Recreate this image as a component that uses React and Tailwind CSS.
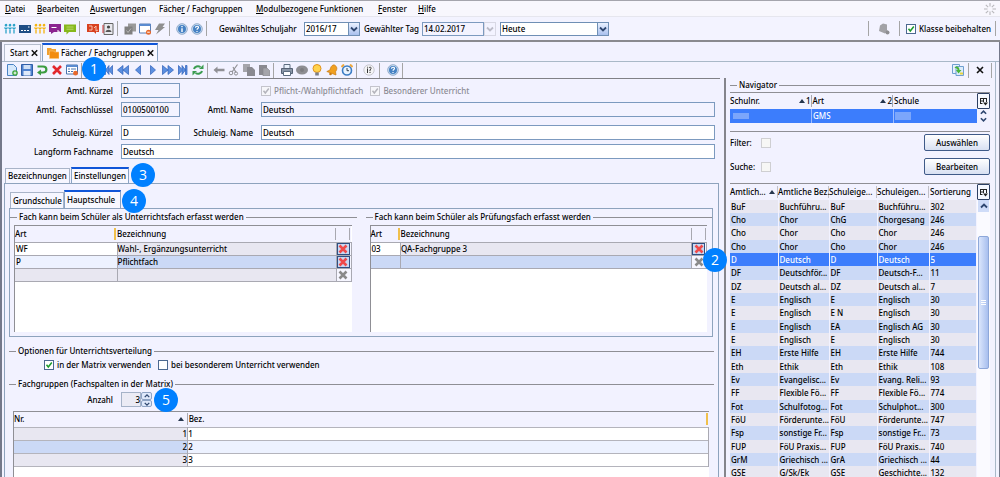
import React, { useState } from 'react';
import clsx from 'clsx';

const MENU = [
  ['', 'D', 'atei', 'w-[32px]'],
  ['', 'B', 'earbeiten', 'w-[53px]'],
  ['', 'A', 'uswertungen', 'w-[69px]'],
  ['Fäche', 'r', ' / Fachgruppen', 'w-[97px]'],
  ['', 'M', 'odulbezogene Funktionen', 'w-[122px]'],
  ['', 'F', 'enster', 'w-[40px]'],
  ['', 'H', 'ilfe', 'w-[30px]'],
];

const SUBJECTS = [
  ['BuF', 'Buchführu...', 'BuF', 'Buchführu...', '302'],
  ['Cho', 'Chor', 'ChG', 'Chorgesang', '246'],
  ['Cho', 'Chor', 'Cho', 'Chor', '246'],
  ['Cho', 'Chor', 'Cho', 'Chor', '246'],
  ['D', 'Deutsch', 'D', 'Deutsch', '5'],
  ['DF', 'Deutschför...', 'DF', 'Deutsch-F...', '11'],
  ['DZ', 'Deutsch al...', 'DZ', 'Deutsch al...', '7'],
  ['E', 'Englisch', 'E', 'Englisch', '30'],
  ['E', 'Englisch', 'E N', 'Englisch', '30'],
  ['E', 'Englisch', 'EA', 'Englisch AG', '30'],
  ['E', 'Englisch', 'E', 'Englisch', '30'],
  ['EH', 'Erste Hilfe', 'EH', 'Erste Hilfe', '744'],
  ['Eth', 'Ethik', 'Eth', 'Ethik', '108'],
  ['Ev', 'Evangelisc...', 'Ev', 'Evang. Reli...', '93'],
  ['FF', 'Flexible Fö...', 'FF', 'Flexible Fö...', '774'],
  ['Fot', 'Schulfotog...', 'Fot', 'Schulphot...', '300'],
  ['FöU', 'Förderunte...', 'FöU', 'Förderunte...', '747'],
  ['Fsp', 'sonstige Fr...', 'Fsp', 'sonstige Fr...', '73'],
  ['FUP', 'FöU Praxis...', 'FUP', 'FöU Praxis...', '740'],
  ['GrM', 'Griechisch ...', 'GrA', 'Griechisch ...', '44'],
  ['GSE', 'G/Sk/Ek', 'GSE', 'Geschichte...', '132'],
];

const Icon = ({ children, className }) => (
  <svg viewBox="0 0 12 12" className={clsx('size-3 shrink-0', className)} aria-hidden="true">{children}</svg>
);

const IconButton = ({ label, children, disabled }) => (
  <button type="button" aria-label={label} title={label} disabled={disabled} className="size-3 shrink-0">
    <Icon>{children}</Icon>
  </button>
);

const Sep = () => <span className="w-px h-[15px] bg-[#a5a5a5] shrink-0" />;

const People = ({ color }) => (
  <g fill="none" stroke={color} strokeWidth="1.3">
    <circle cx="2" cy="2.2" r=".7" /><circle cx="6" cy="2.2" r=".7" /><circle cx="10" cy="2.2" r=".7" />
    <path d="M.5 4.5 2 6l1.500-1.500M4.500 4.500 6 6l1.500-1.500M8.500 4.500 10 6l1.500-1.500M2 5.500v5M6 5.500v5M10 5.500v5" />
  </g>
);

const QuestionBall = ({ label, sign }) => (
  <IconButton label={label}>
    <circle cx="6" cy="6" r="5.300" fill="#cfe0f2" stroke="#7d9cc0" strokeWidth=".8" />
    <circle cx="6" cy="6" r="4" fill="#4682c4" />
    {sign === 'i'
      ? <path d="M6 3v1.200M6 5.200V9" stroke="#fff" strokeWidth="1.400" />
      : <path d="M4.500 4.800c0-2 3-2 3-.2 0 1-1.500 1-1.500 2.200M6 7.900v1" fill="none" stroke="#fff" strokeWidth="1.200" />}
  </IconButton>
);

const Badge = ({ n, className }) => (
  <span className={clsx('absolute z-10 size-6 rounded-full bg-[#0080ff] text-white text-[14px] leading-6 text-center font-normal font-["Open_Sans",sans-serif]', className)}>{n}</span>
);

const Chevron = ({ className = 'size-2', stroke = '#2f4770' }) => (
  <svg viewBox="0 0 8 8" className={className} aria-hidden="true">
    <path d="M1 2.500 4 5.500 7 2.500" fill="none" stroke={stroke} strokeWidth="1.800" />
  </svg>
);

const SortUp = () => (
  <svg viewBox="0 0 6 4" className="w-[6px] h-1 shrink-0" aria-hidden="true"><path d="M0 4 3 0l3 4z" fill="#26364e" /></svg>
);

const Combo = ({ id, value, className }) => (
  <div className={clsx('relative h-[14px]', className)}>
    <select id={id} aria-label={value} defaultValue={value} className="appearance-none block w-full h-full bg-white border border-[#6f8fb5] pl-px outline-none leading-3">
      <option>{value}</option>
    </select>
    <span className="absolute right-0 top-0 h-full w-3 border border-[#6f8fb5] bg-linear-to-b from-[#eaf1ff] to-[#a9c0ee] flex items-center justify-center pointer-events-none">
      <Chevron />
    </span>
  </div>
);

const Check = ({ label, checked, disabled }) => {
  const [on, setOn] = useState(!!checked);
  return (
    <label className={clsx('flex items-center gap-[3px] whitespace-nowrap', disabled && 'text-[#8c8c94]')}>
      <span className="relative size-[10px] shrink-0">
        <input type="checkbox" checked={on} disabled={disabled} onChange={e => setOn(e.target.checked)}
          className="appearance-none block size-[10px] border border-[#4b6890] bg-white disabled:border-[#c4c4cc] disabled:bg-[#f6f6fa]" />
        {on && (
          <svg viewBox="0 0 10 10" className="absolute inset-0 size-[10px] pointer-events-none" aria-hidden="true">
            <path d="M2.500 4.800 4.300 7l3.500-4.500" fill="none" stroke={disabled ? '#b4b4bc' : '#1c9a2c'} strokeWidth="1.500" />
          </svg>
        )}
      </span>
      {label}
    </label>
  );
};

const Field = ({ id, label, value, readOnly, className }) => (
  <>
    <label htmlFor={id} className="text-right whitespace-pre">{label}</label>
    <input id={id} defaultValue={value} readOnly={readOnly}
      className={clsx('h-[15px] min-w-0 border border-[#7c9abf] px-px outline-none', readOnly ? 'bg-[#f3f3ff]' : 'bg-white', className)} />
  </>
);

const GroupTitle = ({ children }) => (
  <div className="flex items-center h-3 gap-[2px] whitespace-nowrap">
    <span className="w-[7px] h-px bg-[#8f8f95]" />
    <h2>{children}</h2>
    <span className="flex-1 h-px bg-[#8f8f95]" />
  </div>
);

const DeleteButton = ({ disabled }) => (
  <button type="button" aria-label="Zeile löschen" disabled={disabled}
    className="flex items-center justify-center w-[13px] h-3 border border-[#2f4f82] bg-[#c9d8f2] disabled:border-transparent disabled:bg-transparent">
    <svg viewBox="0 0 10 10" className="size-[10px] shrink-0" aria-hidden="true">
      <path d="M1.500 1.500 8.500 8.500M8.500 1.500 1.500 8.500" stroke={disabled ? '#8a8a8a' : '#f04a4a'} strokeWidth="2.600" />
    </svg>
  </button>
);

const AssignTable = ({ rows, artWidth }) => (
  <div className="ml-1 mr-[5px] h-[107px] mt-[2px] bg-white border-t border-l border-[#8f8f95]">
    <table className="w-full table-fixed border-collapse text-left">
      <colgroup><col className={artWidth} /><col /><col className="w-[15px]" /></colgroup>
      <thead>
        <tr className="h-4 bg-[#f2f2ff]">
          <th className="font-medium p-0"><div className="h-3 leading-3 border-r-2 border-[#f0c04c] mr-px">Art</div></th>
          <th className="font-medium p-0"><div className="h-3 leading-3 border-r border-[#a8a8b0]">Bezeichnung</div></th>
          <th className="p-0"><div className="h-3 border-r border-[#a8a8b0] mr-px" /></th>
        </tr>
      </thead>
      <tbody>
        {rows.map(([art, name, artBg, bg], i) => (
          <tr key={i} className="h-[13px] border-y border-[#a9a9b2]">
            <td className={clsx('p-0 pl-px leading-3 border-r border-[#a9a9b2]', artBg)}>{art}</td>
            <td className={clsx('p-0 leading-3 border-r border-[#a9a9b2]', bg)}>{name}</td>
            <td className="p-0 border-r border-[#a9a9b2] bg-[#f6f6ff]"><DeleteButton disabled={!art} /></td>
          </tr>
        ))}
      </tbody>
    </table>
  </div>
);

const Tab = ({ active, onClick, children, className }) => (
  <button type="button" role="tab" aria-selected={active} onClick={onClick}
    className={clsx('border border-b-0 whitespace-nowrap text-left pl-[2px]', active ? 'border-[#8aa4c4] border-t-2 border-t-[#0f55d8] bg-[#f8f8ff] self-stretch' : 'border-[#a9b4c8] bg-[#f6f6ff]', className)}>
    {children}
  </button>
);

const ColumnButton = () => (
  <button type="button" aria-label="Spalten wählen" className="w-[13px] h-4 border border-[#2d3f63] rounded-[1px] bg-[#f6f8ff] flex items-center justify-center">
    <svg viewBox="0 0 9 9" className="size-[9px]" aria-hidden="true">
      <path d="M1 1.500h7M1.500 1v5.500M4.500 1v4M7.500 1v4M1 4h3.500M1 6.500h2.500" stroke="#222" fill="none" />
      <path d="M4 5.500h5L6.500 8.500z" fill="#222" />
    </svg>
  </button>
);

function MainToolbar() {
  return (
    <div className="flex items-center h-[25px] shrink-0 pl-1 pr-1 bg-[#f3f3ff] border-b-2 border-[#8a8a8f]">
      <div className="flex items-center gap-[3px]">
        <IconButton label="Schüler"><People color="#2ba3c9" /></IconButton>
        <IconButton label="Klassen">
          <path d="M0 2h12v8H0z" fill="#1f4e86" /><path d="M2 7.500h2m1 0h2m1 0h2M9 4h1.500" stroke="#fff" strokeWidth="1.200" />
        </IconButton>
        <IconButton label="Lehrkräfte"><People color="#f5b30f" /></IconButton>
        <IconButton label="Unterricht">
          <path d="M0 1h12v8H5l-3 2V9H0z" fill="#8a2490" /><path d="M2.500 4.500h5M8 8h2v2" stroke="#fff" fill="none" />
        </IconButton>
        <IconButton label="Nachrichten">
          <path d="M0 1.500h12v7.500H5l-2.500 2.500V9H0z" fill="#86b81c" /><path d="M2.500 4h7M2.500 6.200h7" stroke="#c6df80" strokeWidth=".8" />
        </IconButton>
        <Sep />
      </div>
      <div className="flex items-center gap-[3px] ml-[7px]">
        <IconButton label="Berichte">
          <path d="M0 1h12v8h-3v2l-2-2H0z" fill="#d8401f" /><path d="M2 3h3v4H2M7 5l2-2v5l2-1" stroke="#f6c0b0" fill="none" />
        </IconButton>
        <IconButton label="Adressbuch">
          <path d="M2 .5h9v11H2z" fill="#e8e8ee" stroke="#666" /><circle cx="6.500" cy="4" r="1.600" fill="#444" /><path d="M3.500 9c.5-3 5.500-3 6 0z" fill="#555" /><path d="M1 2v8" stroke="#c33" />
        </IconButton>
        <Sep />
      </div>
      <div className="flex items-center gap-[3px] ml-[6px]">
        <IconButton label="Ansichten" disabled>
          <path d="M4 .5h8v8H4z" fill="#9a9a9a" /><path d="M.5 3.500h8v8h-8z" fill="#808080" /><path d="m2.500 7.500 1.500 2 3-4" stroke="#b8b8b8" fill="none" />
        </IconButton>
        <IconButton label="Fenster schließen">
          <path d="M.5 1h11v9H.5z" fill="#fff" stroke="#5a7fb5" /><path d="M.5 1h11v2H.5z" fill="#5a8bd0" /><circle cx="9.500" cy="9.200" r="2.500" fill="#e8682a" /><path d="M8.200 9.200h2.600" stroke="#fff" />
        </IconButton>
        <IconButton label="Schnellstart" disabled><path d="M5 .5h6L8.500 4H11L2 11.500 4.500 7H1z" fill="#8f8f8f" /></IconButton>
        <Sep />
      </div>
      <div className="flex items-center gap-[3px] ml-[6px]">
        <QuestionBall label="Information" sign="i" />
        <QuestionBall label="Hilfe" sign="?" />
        <Sep />
      </div>
      <label htmlFor="year" className="ml-3 w-[85px] whitespace-nowrap">Gewähltes Schuljahr</label>
      <Combo id="year" value="2016/17" className="w-[56px]" />
      <label htmlFor="day" className="ml-1 w-[58px] whitespace-nowrap">Gewählter Tag</label>
      <input id="day" defaultValue="14.02.2017" className="w-[62px] h-[14px] border border-[#7c9abf] bg-[#f3f3ff] px-px outline-none" />
      <span className="flex items-center justify-center w-3 h-[14px] border border-[#d8d8e4]"><Chevron stroke="#bcbcc8" /></span>
      <Combo id="preset" value="Heute" className="w-[109px] ml-1" />
      <div className="ml-auto flex items-center">
        <Sep />
        <Icon className="mx-[9px]">
          <path d="M2 2.500 5 .5l4 1v5.500L10 8 7 10.500 1 8z" fill="#a2a2a6" /><circle cx="9.500" cy="9.500" r="2" fill="#8e8e92" />
        </Icon>
        <Sep />
        <div className="ml-[6px] mr-1"><Check label="Klasse beibehalten" checked /></div>
        <Sep />
      </div>
    </div>
  );
}

const BLUE = { fill: '#5b8fe0', stroke: '#2c5fb8', strokeWidth: '.7' };

function RecordToolbar() {
  return (
    <div className="relative flex items-center h-4 shrink-0 pl-[3px] pr-[3px]">
      <div className="flex items-center gap-[3px]">
        <IconButton label="Neu">
          <path d="M1.500.5h6l3 3v8h-9z" fill="#d6e8fb" stroke="#4a83c4" /><circle cx="9" cy="9" r="2.800" fill="#3da53a" /><path d="M7.500 9h3M9 7.500v3" stroke="#fff" />
        </IconButton>
        <IconButton label="Speichern">
          <path d="M.5.500h11v11H.5z" fill="#4f82cf" stroke="#2f5fa8" /><path d="M2.500 1h7v4h-7z" fill="#cfe0f6" /><path d="M2.500 7h7v4.500h-7z" fill="#dfeafa" />
        </IconButton>
        <IconButton label="Rückgängig"><path d="M1.500 2.500h5.500c4.500 0 4.500 6 0 6H4" fill="none" stroke="#3b9c40" strokeWidth="2.200" /><path d="M5 5.500v6l-4-3z" fill="#3b9c40" /></IconButton>
        <IconButton label="Löschen"><path d="m2 2 8 8m0-8-8 8" stroke="#e2272c" strokeWidth="2.600" /></IconButton>
        <IconButton label="Formular">
          <path d="M.5 1h11v9H.5z" fill="#fff" stroke="#4a74ad" /><path d="M.5 1h11v2H.5z" fill="#5a8bd0" /><path d="M2 5h2m1 0h5M2 7.500h2m1 0h2" stroke="#4a74ad" /><circle cx="9.500" cy="9.200" r="2.400" fill="#e8682a" />
        </IconButton>
        <Sep />
      </div>
      <div className="flex items-center gap-[3px] ml-[20px]">
        <IconButton label="Erster"><path d="M2 1.500h1.500v9H2zM10.500 1.500v9L7 6.500v4L3.500 6 7 1.500v4z" {...BLUE} /></IconButton>
        <IconButton label="Zurückspulen"><path d="M6 1.500v9L.5 6zM11.500 1.500v9L6 6z" {...BLUE} /></IconButton>
        <IconButton label="Voriger"><path d="M8.500 1.500v9L3.500 6z" {...BLUE} /></IconButton>
        <IconButton label="Nächster"><path d="M3.500 1.500v9L8.500 6z" {...BLUE} /></IconButton>
        <IconButton label="Vorspulen"><path d="M.5 1.500v9L6 6zM6 1.500v9L11.500 6z" {...BLUE} /></IconButton>
        <IconButton label="Letzter"><path d="M1.500 1.500v9L5 6.500v4L8.500 6 5 1.500v4zM8.500 1.500H10v9H8.500z" {...BLUE} /></IconButton>
        <IconButton label="Aktualisieren">
          <path d="M2 5C2.500 2.500 6 1.500 8.500 3M10 7c-.5 2.500-4 3.500-6.500 2" fill="none" stroke="#3b9c50" strokeWidth="2" />
          <path d="M7 5h4.500V.5zM5 7H.5v4.500z" fill="#3b9c50" />
        </IconButton>
        <Sep />
      </div>
      <div className="flex items-center gap-[3px] ml-[5px]">
        <IconButton label="Zurück" disabled><path d="M4.500 2.500.5 6l4 3.500V7.200h7V4.800h-7z" fill="#909095" /></IconButton>
        <IconButton label="Ausschneiden" disabled>
          <path d="M9.500.5 4 8M5 3l3 5.500" stroke="#909095" strokeWidth="1.200" /><circle cx="3" cy="9" r="1.800" fill="none" stroke="#909095" /><circle cx="8" cy="9.500" r="1.600" fill="none" stroke="#909095" />
        </IconButton>
        <IconButton label="Kopieren" disabled><path d="M0 0h7v8H0z" fill="#a5a5aa" /><path d="M4 3h5l3 3v6H4z" fill="#8a8a90" /></IconButton>
        <IconButton label="Einfügen" disabled><path d="M1 1h8v10H1z" fill="#8a8a90" /><path d="M5 4h4l3 3v5H5z" fill="#a5a5aa" stroke="#85858a" strokeWidth=".6" /></IconButton>
        <Sep />
      </div>
      <div className="flex items-center gap-[3px] ml-[7px]">
        <IconButton label="Drucken">
          <path d="M3 .5h6v4H3z" fill="#e9f1fb" stroke="#5d6d80" /><path d="M.5 4.500h11v5H.5z" fill="#8b97a8" stroke="#566274" /><path d="M2.500 7.500h7v4h-7z" fill="#fff" stroke="#5d6d80" />
        </IconButton>
        <IconButton label="Vorschau" disabled><ellipse cx="6" cy="6" rx="6" ry="4.500" fill="#8e8e92" /><circle cx="6" cy="6" r="2" fill="#7c7c80" /></IconButton>
        <IconButton label="Tipp"><circle cx="6" cy="4.500" r="4" fill="#ffd34d" stroke="#e0921d" /><path d="M4.200 8.500h3.600v3H4.200z" fill="#7b7f88" /></IconButton>
        <IconButton label="Erinnerung"><path d="M8 .8c3.500 1.500 3.500 4.500 1.500 7L10 11 .8 7.500 4 6c.5-2.500 1.500-5 4-5.200z" fill="#f0a020" stroke="#c97a10" strokeWidth=".7" /><circle cx="4.500" cy="10" r="1.300" fill="#c97a10" /></IconButton>
        <IconButton label="Wecker">
          <path d="M.5 3 3 .5M11.500 3 9 .5" stroke="#f0a83a" strokeWidth="2" /><circle cx="6" cy="6.500" r="4.500" fill="#e8f3ff" stroke="#3a7cc4" strokeWidth="1.600" /><path d="M6 4v2.700h2" stroke="#234" fill="none" strokeWidth=".9" />
        </IconButton>
        <Sep />
      </div>
      <div className="flex items-center gap-1 ml-[6px]">
        <IconButton label="Info"><circle cx="6" cy="6" r="5.200" fill="#f4f4f6" stroke="#bdbdc4" strokeWidth=".8" /><path d="M4.500 4.500V9M4.500 2.800v.8M6 4c.5-1.300 2.500-1 2 .5L7 6v1.200M7 8v1" stroke="#333" fill="none" /></IconButton>
        <Sep />
      </div>
      <div className="flex items-center gap-[3px] ml-[7px]">
        <QuestionBall label="Hilfe zum Modul" sign="?" />
        <Sep />
      </div>
      <div className="ml-auto flex items-center gap-1">
        <IconButton label="Synchronisieren">
          <path d="M.5.500h7v9h-7z" fill="#e6f2fc" stroke="#6f9fd0" /><path d="M4 2.500h7.500v9H4z" fill="#dcebfa" stroke="#6f9fd0" /><path d="M2.500 4c2-3 5-1 5 2h2L6.500 9.500 4 6h1.500c0-1.500-1.500-2-3-2z" fill="#4ab53a" /><path d="M8 8.500h3v2H8z" fill="#e8d33c" />
        </IconButton>
        <Sep />
        <button type="button" aria-label="Schließen" className="mx-px"><Icon><path d="m3 3 6 6m0-6-6 6" stroke="#111" strokeWidth="1.600" /></Icon></button>
        <Sep />
      </div>
      <Badge n={1} className="left-[79px] -top-[5px]" />
    </div>
  );
}

function SubjectForm() {
  return (
    <div className="pt-1 pr-[5px]">
      <div className="grid grid-cols-[110px_59px_65px_1fr] gap-x-2 gap-y-1 items-center">
        <Field id="amtl-kuerzel" label="Amtl. Kürzel" value="D" readOnly />
        <span />
        <div className="flex gap-[7px]">
          <Check label="Pflicht-/Wahlpflichtfach" checked disabled />
          <Check label="Besonderer Unterricht" checked disabled />
        </div>
        <Field id="amtl-schluessel" label="Amtl.  Fachschlüssel" value="0100500100" readOnly />
        <Field id="amtl-name" label="Amtl. Name" value="Deutsch" readOnly />
      </div>
      <div className="grid grid-cols-[110px_59px_65px_1fr] gap-x-2 gap-y-1 items-center mt-2">
        <Field id="eig-kuerzel" label="Schuleig. Kürzel" value="D" />
        <Field id="eig-name" label="Schuleig. Name" value="Deutsch" />
        <Field id="langform" label="Langform Fachname" value="Deutsch" className="col-span-3" />
      </div>
    </div>
  );
}

function SettingsPanel() {
  const [school, setSchool] = useState('Hauptschule');
  return (
    <div className="flex-1 flex flex-col mr-px ml-px border-t border-x border-[#8ea3bd] pt-[6px] px-1">
      <div role="tablist" className="relative flex items-end h-[18px] ml-px">
        <Tab active={school === 'Grundschule'} onClick={() => setSchool('Grundschule')} className="h-4 w-[54px]">Grundschule</Tab>
        <Tab active={school === 'Hauptschule'} onClick={() => setSchool('Hauptschule')} className="w-[57px]">Hauptschule</Tab>
        <Badge n={4} className="left-[112px] -top-px" />
      </div>
      <div className="relative grid grid-cols-2 gap-x-[9px] mr-px h-[129px] pt-[2px] border border-[#8ea3bd]">
        <section>
          <GroupTitle>Fach kann beim Schüler als Unterrichtsfach erfasst werden</GroupTitle>
          <AssignTable artWidth="w-[102px]" rows={[
            ['WF', 'Wahl-, Ergänzungsunterricht', 'bg-white', 'bg-[#e8e7f1]'],
            ['P', 'Pflichtfach', 'bg-[#edf2ff]', 'bg-[#cbd9f6]'],
            ['', '', 'bg-[#e8e7f1]', 'bg-[#e8e7f1]'],
          ]} />
        </section>
        <section>
          <GroupTitle>Fach kann beim Schüler als Prüfungsfach erfasst werden</GroupTitle>
          <AssignTable artWidth="w-[30px]" rows={[
            ['03', 'QA-Fachgruppe 3', 'bg-white', 'bg-[#e8e7f1]'],
            ['', '', 'bg-[#cbd9f6]', 'bg-[#cbd9f6]'],
          ]} />
        </section>
        <Badge n={2} className="-right-[15px] top-[39px]" />
      </div>
      <section className="mt-2">
        <GroupTitle>Optionen für Unterrichtsverteilung</GroupTitle>
        <div className="flex gap-[7px] pl-[35px] mt-[3px] h-[10px] items-center">
          <Check label="in der Matrix verwenden" checked />
          <Check label="bei besonderem Unterricht verwenden" />
        </div>
      </section>
      <section className="mt-2 flex-1 flex flex-col">
        <GroupTitle>Fachgruppen (Fachspalten in der Matrix)</GroupTitle>
        <div className="relative flex items-center h-[15px] mt-[2px]">
          <label htmlFor="anzahl" className="w-[104px] text-right">Anzahl</label>
          <input id="anzahl" defaultValue="3" className="ml-2 w-5 h-[15px] border border-[#a5b2c8] bg-[#ebebf5] text-right outline-none" />
          <span className="flex flex-col w-[11px]">
            <button type="button" aria-label="Mehr" className="h-2 border border-[#8ea3c4] rounded-[2px] bg-[#dfe8fb] flex items-center justify-center"><Chevron className="rotate-180 size-[6px]" /></button>
            <button type="button" aria-label="Weniger" className="h-[7px] border border-[#8ea3c4] rounded-[2px] bg-[#dfe8fb] flex items-center justify-center"><Chevron className="size-[6px]" /></button>
          </span>
          <Badge n={5} className="left-[145px] -top-1" />
        </div>
        <div className="flex-1 mt-1 ml-1 mr-[5px] bg-white border-t border-l border-[#8f8f95]">
          <table className="w-full table-fixed border-collapse text-left">
            <colgroup><col className="w-1/4" /><col /></colgroup>
            <thead>
              <tr className="h-[15px] bg-[#f2f2ff]">
                <th className="font-medium p-0"><div className="flex items-center justify-between h-3 border-r border-[#a8a8b0] pr-[3px]">Nr.<SortUp /></div></th>
                <th className="font-medium p-0 pr-px"><div className="h-3 leading-3 border-r-2 border-[#f0c04c] pl-px">Bez.</div></th>
              </tr>
            </thead>
            <tbody>
              {[1, 2, 3].map(n => (
                <tr key={n} className="h-[13px] border-y border-[#b4b4bc]">
                  <td className={clsx('p-0 leading-3 text-right border-r border-[#a9a9b2]', n === 2 ? 'bg-[#cbd9f6]' : 'bg-[#e8e7f1]')}>{n}</td>
                  <td className={clsx('p-0 leading-3 border-r border-[#a9a9b2]', n === 2 ? 'bg-[#edf2ff]' : 'bg-white')}>{n}</td>
                </tr>
              ))}
            </tbody>
          </table>
        </div>
      </section>
    </div>
  );
}

function Navigator() {
  return (
    <aside className="w-[271px] shrink-0 border-l-2 border-[#85858c] pl-1 pr-[5px] pt-px flex flex-col">
      <GroupTitle>Navigator</GroupTitle>
      <div className="flex mt-px border-t border-[#8f8f95]">
        <table className="flex-1 table-fixed border-collapse text-left">
          <colgroup><col className="w-[33%]" /><col className="w-[33%]" /><col /></colgroup>
          <thead>
            <tr className="h-4">
              <th className="font-medium p-0"><div className="flex justify-between items-center h-3 border-r border-[#a8a8b0]">Schulnr.<span className="flex items-center gap-px">
                <SortUp />1</span></div></th>
              <th className="font-medium p-0"><div className="flex justify-between items-center h-3 border-r border-[#a8a8b0] pl-px">Art<span className="flex items-center gap-px">
                <SortUp />2</span></div></th>
              <th className="font-medium p-0 pl-px">Schule</th>
            </tr>
          </thead>
          <tbody>
            <tr className="h-[13px] bg-[#3c7dfc] text-white">
              <td className="p-0 border-r border-[#9dbcff]"><span className="block ml-[3px] w-4 h-[6px] bg-[#7ba6fb]" /></td>
              <td className="p-0 pl-px leading-3 border-r border-[#9dbcff]">GMS</td>
              <td className="p-0"><span className="block ml-px w-4 h-2 bg-[#7ba6fb]" /></td>
            </tr>
          </tbody>
        </table>
        <div className="w-[13px] flex flex-col items-center">
          <ColumnButton />
          <Chevron className="rotate-180 size-[7px]" />
          <Chevron className="size-[7px]" />
        </div>
      </div>
      <div className="mt-2 border-t border-[#8f8f95] pt-[2px] flex flex-col gap-[7px]">
        {[['Filter:', 'Auswählen'], ['Suche:', 'Bearbeiten']].map(([label, action]) => (
          <div key={label} className="flex items-center h-[17px]">
            <label htmlFor={action} className="w-[31px]">{label}</label>
            <input id={action} type="checkbox" className="appearance-none size-[10px] border border-[#cfcfd2] bg-[#f7f7f5]" />
            <button type="button" className="ml-auto w-[66px] h-[17px] border border-[#3f5a88] rounded-[2px] bg-linear-to-b from-white to-[#d8e0f2]">{action}</button>
          </div>
        ))}
      </div>
      <div className="flex mt-2 border-t border-[#8f8f95] flex-1 min-h-0">
        <div className="flex-1 min-w-0">
          <table className="w-full table-fixed border-collapse text-left">
            <colgroup><col className="w-[48px]" /><col className="w-[51px]" /><col className="w-[48px]" /><col className="w-[52px]" /><col /></colgroup>
            <thead>
              <tr className="h-4">
                <th className="font-medium p-0"><div className="flex items-center justify-between h-3 pr-[2px] border-r border-[#c0c0c8]">Amtlich...<SortUp /></div></th>
                {['Amtliche Bez.', 'Schuleige...', 'Schuleigen...'].map(h => (
                  <th key={h} className="font-medium p-0"><div className="h-3 leading-3 whitespace-nowrap border-r border-[#c0c0c8]">{h}</div></th>
                ))}
                <th className="font-medium p-0 pl-px">Sortierung</th>
              </tr>
            </thead>
            <tbody>
              {SUBJECTS.map((row, i) => (
                <tr key={i} className={clsx('h-[13px] nth-[3n]:h-[14px]', i === 4 ? 'bg-[#3c7dfc] text-white' : i % 2 ? 'bg-[#cbd9f6]' : 'bg-[#e8e7f1]')}>
                  {row.map((cell, c) => (
                    <td key={c} className="p-0 pl-px leading-3 whitespace-nowrap border-r border-[#f2f2ff]">{cell}</td>
                  ))}
                </tr>
              ))}
            </tbody>
          </table>
        </div>
        <div className="w-[13px] flex flex-col">
          <ColumnButton />
          <div className="flex-1 bg-[#fafaff] flex flex-col pl-px">
            <button type="button" aria-label="Nach oben" className="h-3 w-[11px] bg-[#cfdcf8] flex items-center justify-center"><Chevron className="rotate-180 size-2" /></button>
            <div className="mt-6 h-[133px] w-[11px] rounded-[2px] border border-[#8ea8da] bg-linear-to-r from-[#dbe6fc] to-[#a8bfee] flex flex-col items-center justify-center gap-px">
              <span className="w-[5px] h-px bg-white" /><span className="w-[5px] h-px bg-white" /><span className="w-[5px] h-px bg-white" />
            </div>
          </div>
        </div>
      </div>
    </aside>
  );
}

export default function App() {
  const [view, setView] = useState('Einstellungen');
  return (
    <div className='h-screen overflow-hidden flex flex-col bg-[#f2f2ff] text-black text-[8px] leading-3 font-medium font-["Noto_Sans",sans-serif]'>
      <header className="flex items-center h-[17px] border-t border-b border-t-[#a5a5ad] border-b-[#e6e6ee] bg-[#f8f7fd] pl-[5px] pr-1 pt-px shrink-0">
        <nav className="flex flex-1">
          {MENU.map(([pre, key, post, width]) => (
            <a key={post} href="#menu" className={clsx('whitespace-nowrap', width)}>{pre}<u>{key}</u>{post}</a>
          ))}
        </nav>
        <Icon>
          <path d="M6 0v3.500M6 8.500V12M0 6h3.500M8.500 6H12M1.800 1.800l2.400 2.400M7.800 7.800l2.400 2.400M10.200 1.800 7.800 4.200M4.200 7.800l-2.400 2.400" stroke="#b8b8bc" strokeWidth="1.100" />
        </Icon>
      </header>
      <MainToolbar />
      <div className="flex-1 min-h-0 flex flex-col border-l-2 border-r border-l-[#74788a] border-r-[#74788a]">
        <div className="flex items-end h-5 pl-[2px] gap-px border-b border-[#a9b8c8] shrink-0">
          <div className="flex items-center h-[17px] w-[37px] pl-[5px] border border-b-0 border-[#b4bccc] bg-[#f6f6ff]">
            <button type="button">Start</button>
            <button type="button" aria-label="Start schließen"><Icon className="size-[11px]"><path d="m3 2.500 6 6m0-6-6 6" stroke="#111" strokeWidth="1.600" /></Icon></button>
          </div>
          <div className="flex items-center h-[18px] w-[116px] pl-1 border border-b-0 border-[#8aa4c4] border-t-2 border-t-[#0f55d8] bg-[#f8f8ff]">
            <Icon><path d="M0 1h4l1 1h4v6H0z" fill="#f0a030" /><path d="M2.500 4h4l1 1H12v6.500H2.500z" fill="#f28c0f" stroke="#fbc878" strokeWidth=".6" /></Icon>
            <button type="button" className="ml-[2px] whitespace-nowrap">Fächer / Fachgruppen</button>
            <button type="button" aria-label="Fächer schließen"><Icon className="size-[11px]"><path d="m3 2.500 6 6m0-6-6 6" stroke="#111" strokeWidth="1.600" /></Icon></button>
          </div>
        </div>
        <div className="flex-1 min-h-0 flex flex-col border-r border-[#a9b8c8] mr-[3px] pl-px">
          <RecordToolbar />
          <div className="flex-1 min-h-0 flex gap-1">
            <main className="flex-1 min-w-0 flex flex-col border-t border-[#808086]">
              <SubjectForm />
              <div role="tablist" className="relative flex items-end h-4 mt-2 ml-[2px] gap-px shrink-0">
                <Tab active={view === 'Bezeichnungen'} onClick={() => setView('Bezeichnungen')} className="h-[15px] w-[65px]">Bezeichnungen</Tab>
                <Tab active={view === 'Einstellungen'} onClick={() => setView('Einstellungen')} className="w-[58px]">Einstellungen</Tab>
                <Badge n={3} className="left-[126px] -top-1" />
              </div>
              <SettingsPanel />
            </main>
            <Navigator />
          </div>
        </div>
      </div>
    </div>
  );
}
